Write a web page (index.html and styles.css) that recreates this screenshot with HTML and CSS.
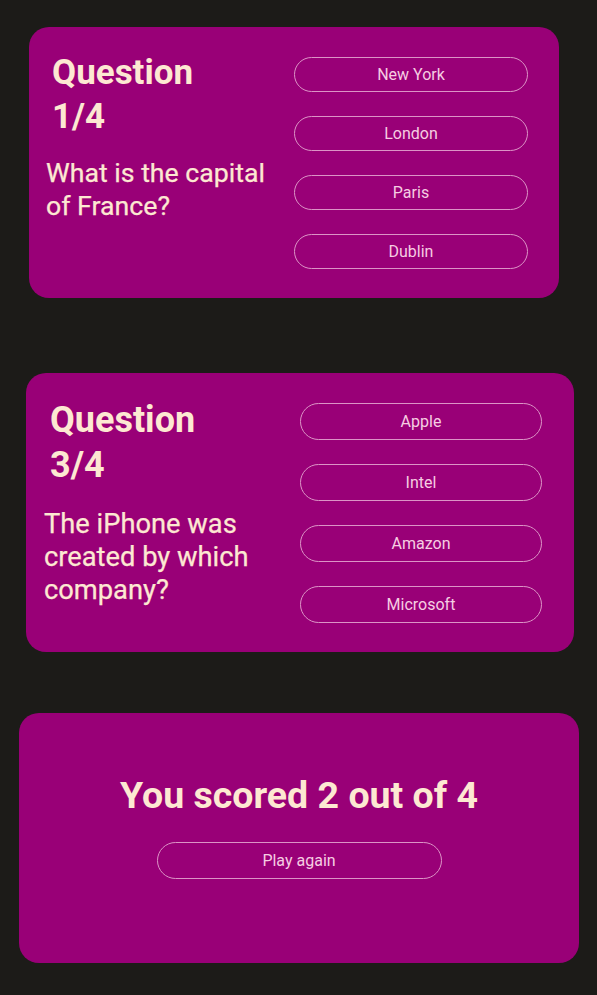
FILE: index.html
```html
<!DOCTYPE html>
<html lang="en">
<head>
<meta charset="utf-8">
<title>Quiz</title>
<link rel="stylesheet" href="styles.css">
</head>
<body>
<main class="page">
  <section class="card card--q1">
    <div class="card__text">
      <h2 class="card__title">Question 1/4</h2>
      <p class="card__question">What is the capital of France?</p>
    </div>
    <div class="card__answers">
      <button class="answer">New York</button>
      <button class="answer">London</button>
      <button class="answer">Paris</button>
      <button class="answer">Dublin</button>
    </div>
  </section>

  <section class="card card--q2">
    <div class="card__text">
      <h2 class="card__title">Question 3/4</h2>
      <p class="card__question">The iPhone was created by which company?</p>
    </div>
    <div class="card__answers">
      <button class="answer">Apple</button>
      <button class="answer">Intel</button>
      <button class="answer">Amazon</button>
      <button class="answer">Microsoft</button>
    </div>
  </section>

  <section class="card card--result">
    <h2 class="result__title">You scored 2 out of 4</h2>
    <button class="answer answer--wide">Play again</button>
  </section>
</main>
</body>
</html>
```

FILE: styles.css
```css
html, body {
  margin: 0;
  padding: 0;
  background: #1c1b18;
}

body {
  font-family: Roboto, "Liberation Sans", Arial, sans-serif;
  color: #fde8d2;
}

.page {
  display: flex;
  flex-direction: column;
  align-items: flex-start;
  padding-top: 27px;
}

.card {
  background: #990077;
  border-radius: 20px;
  box-sizing: border-box;
}

.card--q1 {
  display: grid;
  grid-template-columns: 224px 234px;
  column-gap: 24px;
  width: 530px;
  margin-left: 29px;
  padding: 30px 31px 29px 17px;
}

.card--q2 {
  display: grid;
  grid-template-columns: 232px 242px;
  column-gap: 24px;
  width: 548px;
  margin-left: 26px;
  margin-top: 75px;
  padding: 30px 32px 29px 18px;
}

.card__title {
  max-width: 170px;
  margin: -6px 0 0 6px;
  font-size: 35px;
  line-height: 44px;
  font-weight: 700;
}

.card__question {
  margin: 18px 0 0;
  font-size: 26.7px;
  line-height: 33px;
  font-weight: 400;
  -webkit-text-stroke: 0.25px #fde8d2;
}

.card--q2 .card__title {
  font-size: 36px;
  line-height: 45px;
  margin-top: -5px;
}

.card--q2 .card__question {
  font-size: 27.3px;
  line-height: 33px;
  margin-top: 20px;
}

.card__answers {
  display: flex;
  flex-direction: column;
  gap: 24px;
}

.answer {
  display: block;
  width: 100%;
  height: 35px;
  padding: 0;
  border: 1px solid #dc94c6;
  border-radius: 999px;
  background: transparent;
  color: #f6cde2;
  font-family: Roboto, "Liberation Sans", Arial, sans-serif;
  font-size: 16px;
  line-height: 1;
}

.card--q2 .answer {
  height: 37px;
}

.card--result {
  display: flex;
  flex-direction: column;
  align-items: center;
  width: 560px;
  margin-left: 19px;
  margin-top: 61px;
  padding: 61px 0 84px;
}

.result__title {
  margin: 0;
  font-size: 37.5px;
  line-height: 43px;
  font-weight: 700;
}

.answer--wide {
  width: 285px;
  height: 37px;
  margin-top: 25px;
}
```
